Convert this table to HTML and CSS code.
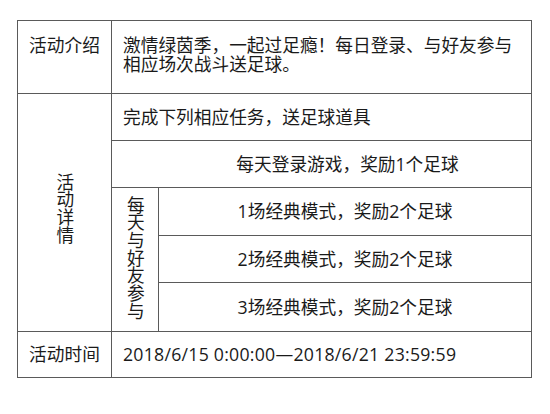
FILE: index.html
```html
<!DOCTYPE html>
<html lang="zh-CN">
<head>
<meta charset="utf-8">
<title>活动</title>
<link rel="stylesheet" href="styles.css">
</head>
<body>
<table class="info">
  <colgroup>
    <col class="c1">
    <col class="c2">
    <col class="c3">
  </colgroup>
  <tr class="r-intro">
    <td class="label top">活动介绍</td>
    <td colspan="2" class="text top">激情绿茵季，一起过足瘾！每日登录、与好友参与相应场次战斗送足球。</td>
  </tr>
  <tr class="r-std">
    <td rowspan="5" class="vert"><span class="vtext">活动详情</span></td>
    <td colspan="2" class="text">完成下列相应任务，送足球道具</td>
  </tr>
  <tr class="r-std">
    <td colspan="2" class="center login">每天登录游戏，奖励1个足球</td>
  </tr>
  <tr class="r-task1">
    <td rowspan="3" class="vert sub"><span class="vtext">每天与好友参与</span></td>
    <td class="center">1场经典模式，奖励2个足球</td>
  </tr>
  <tr class="r-std">
    <td class="center">2场经典模式，奖励2个足球</td>
  </tr>
  <tr class="r-task3">
    <td class="center">3场经典模式，奖励2个足球</td>
  </tr>
  <tr class="r-time">
    <td class="label">活动时间</td>
    <td colspan="2" class="text time">2018/6/15 0:00:00—2018/6/21 23:59:59</td>
  </tr>
</table>
</body>
</html>
```
FILE: styles.css
```css
html, body {
  margin: 0;
  padding: 0;
  background: #ffffff;
}

body {
  font-family: "Open Sans", "Noto Sans CJK SC", sans-serif;
  font-size: 17.7px;
  color: #1a1a1a;
  padding: 20px 0 0 17px;
}

.info {
  border-collapse: collapse;
  table-layout: fixed;
  width: 514px;
}

.c1 { width: 94px; }
.c2 { width: 47px; }
.c3 { width: 373px; }

.info td {
  border: 1px solid #5a5a5a;
  padding: 0 10px;
  line-height: 19px;
  vertical-align: middle;
}

.r-intro { height: 73px; }
.r-std { height: 47px; }
.r-task1 { height: 48px; }
.r-task3 { height: 49px; }
.r-time { height: 46px; }

.info td.top {
  vertical-align: top;
  padding-top: 15px;
}

.info td.label {
  text-align: center;
  padding: 0;
}

.info td.label.top {
  padding-top: 15px;
}

.info td.text {
  padding-left: 11px;
  padding-right: 8px;
}

.info td.time {
  letter-spacing: 0.25px;
}

.info td.center {
  text-align: center;
  padding: 0;
}

.info td.login {
  padding-left: 52px;
}

.info td.vert {
  text-align: center;
  padding: 0;
}

.vtext {
  display: inline-block;
  writing-mode: vertical-rl;
  text-orientation: upright;
  font-family: "Noto Sans CJK SC", sans-serif;
  line-height: 1;
  letter-spacing: 0;
}

.info td.vert:not(.sub) .vtext {
  margin-bottom: 6px;
}
```
